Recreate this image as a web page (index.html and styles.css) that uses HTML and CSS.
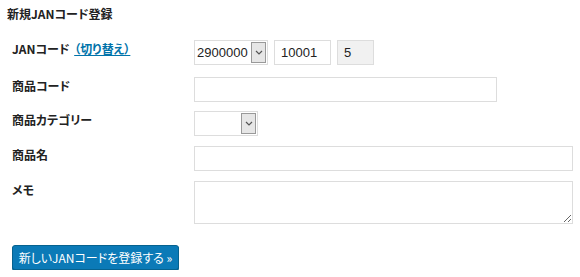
FILE: index.html
```html
<!DOCTYPE html>
<html lang="ja">
<head>
  <meta charset="UTF-8" />
  <title>新規JANコード登録</title>
  <link rel="stylesheet" href="styles.css">
</head>
<body>
  <h3 class="title">新規JANコード登録</h3>

  <form class="jan-form">
    <div class="row">
      <div class="label">JANコード <a href="#">（切り替え）</a></div>
      <div class="field">
        <span class="select" style="width:74px">
          <span class="select-text">2900000</span>
          <span class="select-btn"><svg width="8" height="5" viewBox="0 0 8 5"><path d="M1 1 L4 4 L7 1" fill="none" stroke="#555" stroke-width="1.2"/></svg></span>
        </span>
        <input type="text" class="input jan-mid" value="10001" />
        <input type="text" class="input jan-check" value="5" readonly />
      </div>
    </div>

    <div class="row">
      <div class="label">商品コード</div>
      <div class="field"><input type="text" class="input code" /></div>
    </div>

    <div class="row">
      <div class="label">商品カテゴリー</div>
      <div class="field">
        <span class="select" style="width:64px">
          <span class="select-text"></span>
          <span class="select-btn"><svg width="8" height="5" viewBox="0 0 8 5"><path d="M1 1 L4 4 L7 1" fill="none" stroke="#555" stroke-width="1.2"/></svg></span>
        </span>
      </div>
    </div>

    <div class="row">
      <div class="label">商品名</div>
      <div class="field"><input type="text" class="input wide" /></div>
    </div>

    <div class="row">
      <div class="label">メモ</div>
      <div class="field"><textarea class="input memo"></textarea></div>
    </div>

    <button type="button" class="btn-primary">新しいJANコードを登録する »</button>
  </form>
</body>
</html>
```

FILE: styles.css
```css
body {
  margin: 0;
  padding: 0 0 0 7px;
  background: #fff;
  color: #222;
  font-family: "Noto Sans CJK JP", "Liberation Sans", sans-serif;
  font-size: 12px;
  font-feature-settings: "palt";
}
.title {
  margin: 0;
  padding-top: 5px;
  font-size: 12px;
  font-weight: 600;
  line-height: 18px;
}
.jan-form {
  margin-top: 17px;
}
.row {
  display: flex;
  align-items: flex-start;
  margin-bottom: 10px;
}
.row:nth-child(1) {
  margin-bottom: 12px;
}
.row:nth-child(2) {
  margin-bottom: 9px;
}
.row:nth-child(5) {
  margin-bottom: 11px;
}
.label {
  width: 187px;
  padding-left: 5px;
  box-sizing: border-box;
  font-weight: 600;
  line-height: 18px;
}
.label a {
  margin-left: 2px;
  color: #0073aa;
  font-weight: 600;
}
.field {
  display: flex;
  gap: 6px;
}
.input {
  box-sizing: border-box;
  height: 25px;
  border: 1px solid #ddd;
  padding: 2px 6px;
  font-family: "Liberation Sans", sans-serif;
  font-size: 13px;
  color: #222;
  background: #fff;
  outline: none;
}
.jan-mid {
  width: 57px;
}
.jan-check {
  width: 37px;
  background: #f1f1f1;
}
.code {
  width: 303px;
}
.wide {
  width: 379px;
}
.memo {
  height: 43px;
  width: 379px;
  resize: vertical;
}
.select {
  box-sizing: border-box;
  height: 25px;
  display: flex;
  border: 1px solid #ddd;
  background: #fff;
}
.select-text {
  flex: 1;
  padding: 0 2px;
  line-height: 23px;
  font-family: "Liberation Sans", sans-serif;
  font-size: 13px;
}
.select-btn {
  width: 13px;
  margin: 1px;
  border: 1px solid #999;
  background: #e6e6e6;
  display: flex;
  align-items: center;
  justify-content: center;
}
.btn-primary {
  margin: 10px 0 0 5px;
  height: 25px;
  width: 167px;
  padding: 0;
  background: #0b7ab7;
  border: 1px solid #06628f;
  border-radius: 3px;
  box-shadow: 0 1px 0 #06628f;
  color: #fff;
  font-family: "Noto Sans CJK JP", sans-serif;
  font-size: 12px;
  font-feature-settings: "palt";
  cursor: pointer;
}
```
